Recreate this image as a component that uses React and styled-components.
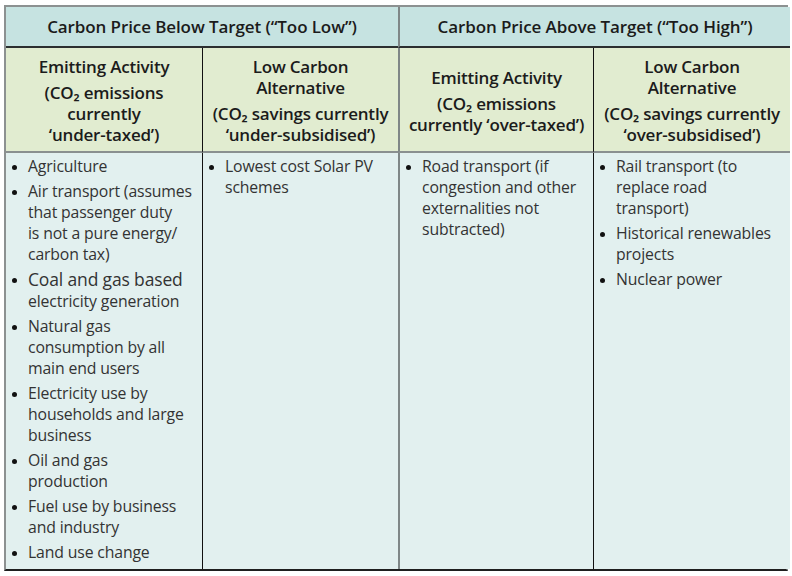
import React from "react";
import styled, { createGlobalStyle } from "styled-components";

const Global = createGlobalStyle`
  html, body {
    margin: 0;
    padding: 0;
    background: #ffffff;
  }
  body {
    font-family: "Open Sans", "Noto Sans", sans-serif;
    color: #222;
  }
`;

const Table = styled.div`
  margin: 5px 0 0 4px;
  width: 784px;
  display: grid;
  grid-template-columns: 196px 196px 195px 197px;
  grid-template-rows: 41px 105px 416px;
  box-sizing: border-box;
  border-top: 2px solid #8c9191;
  border-left: 2px solid #8c9191;
  border-right: 2px solid #8c9191;
  border-bottom: 2px solid #1e1e1e;
`;

const GroupHead = styled.div`
  grid-column: span 2;
  background: #c6e3e1;
  display: flex;
  align-items: center;
  justify-content: center;
  font-weight: 600;
  font-size: 17px;
  letter-spacing: -0.1px;
  color: #1b1b1b;
  border-bottom: 2px solid #2c2f2f;
  border-left: ${(p) => (p.$divider ? "2px solid #7f8787" : "none")};
`;

const SubHead = styled.div`
  background: #e1ecd0;
  display: flex;
  flex-direction: column;
  align-items: center;
  justify-content: center;
  text-align: center;
  font-weight: 600;
  font-size: 17px;
  letter-spacing: -0.2px;
  line-height: 21px;
  color: #1b1b1b;
  border-bottom: 2px solid #8a9090;
  border-left: ${(p) =>
    p.$edge === "group"
      ? "2px solid #7f8787"
      : p.$edge === "inner"
      ? "1px solid #111"
      : "none"};
  padding-top: 2px;
`;

const Para = styled.div`
  white-space: nowrap;
  & + & {
    margin-top: 5px;
  }
`;

const Body = styled.div`
  background: #e2f0ef;
  padding: 3px 0 0 0;
  border-left: ${(p) =>
    p.$edge === "group"
      ? "2px solid #7f8787"
      : p.$edge === "inner"
      ? "1px solid #111"
      : "none"};
`;

const List = styled.ul`
  list-style: none;
  margin: 0;
  padding: 0;
  font-size: 15.8px;
  line-height: 21px;
  letter-spacing: -0.15px;
  color: #333;
`;

const Item = styled.li`
  position: relative;
  padding-left: 22px;
  white-space: nowrap;
  & + & {
    margin-top: 4px;
  }
  &::before {
    content: "";
    position: absolute;
    left: 6px;
    top: 9px;
    width: 5px;
    height: 5px;
    border-radius: 50%;
    background: #111;
  }
`;

const Big = styled.span`
  font-size: 17.5px;
`;

const Lines = ({ lines }) =>
  lines.map((l, i) => (
    <React.Fragment key={i}>
      {i > 0 && <br />}
      {l}
    </React.Fragment>
  ));

const cols = [
  {
    edge: "none",
    items: [
      ["Agriculture"],
      ["Air transport (assumes", "that passenger duty", "is not a pure energy/", "carbon tax)"],
      [<Big key="b">Coal and gas based</Big>, "electricity generation"],
      ["Natural gas", "consumption by all", "main end users"],
      ["Electricity use by", "households and large", "business"],
      ["Oil and gas", "production"],
      ["Fuel use by business", "and industry"],
      ["Land use change"],
    ],
  },
  {
    edge: "inner",
    items: [["Lowest cost Solar PV", "schemes"]],
  },
  {
    edge: "group",
    items: [["Road transport (if", "congestion and other", "externalities not", "subtracted)"]],
  },
  {
    edge: "inner",
    items: [
      ["Rail transport (to", "replace road", "transport)"],
      ["Historical renewables", "projects"],
      ["Nuclear power"],
    ],
  },
];

const App = () => {
  return (
    <>
      <Global />
      <Table>
        <GroupHead>Carbon Price Below Target (“Too Low”)</GroupHead>
        <GroupHead $divider>Carbon Price Above Target (“Too High”)</GroupHead>

        <SubHead $edge="none">
          <Para>Emitting Activity</Para>
          <Para>
            (CO₂ emissions
            <br />
            currently
            <br />
            ‘under-taxed’)
          </Para>
        </SubHead>
        <SubHead $edge="inner">
          <Para>
            Low Carbon
            <br />
            Alternative
          </Para>
          <Para>
            (CO₂ savings currently
            <br />
            ‘under-subsidised’)
          </Para>
        </SubHead>
        <SubHead $edge="group">
          <Para>Emitting Activity</Para>
          <Para>
            (CO₂ emissions
            <br />
            currently ‘over-taxed’)
          </Para>
        </SubHead>
        <SubHead $edge="inner">
          <Para>
            Low Carbon
            <br />
            Alternative
          </Para>
          <Para>
            (CO₂ savings currently
            <br />
            ‘over-subsidised’)
          </Para>
        </SubHead>

        {cols.map((c, ci) => (
          <Body key={ci} $edge={c.edge}>
            <List>
              {c.items.map((it, ii) => (
                <Item key={ii}>
                  <Lines lines={it} />
                </Item>
              ))}
            </List>
          </Body>
        ))}
      </Table>
    </>
  );
};

export default App;
